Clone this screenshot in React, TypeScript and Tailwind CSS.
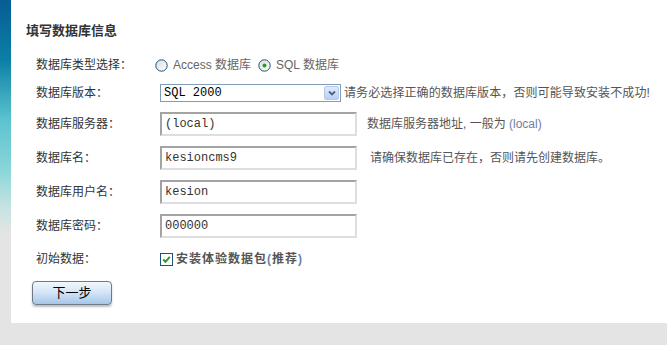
import React from "react";

const font = { fontFamily: '"Liberation Sans", "Noto Sans CJK SC", sans-serif' };

function Label({ children }: { children: React.ReactNode }) {
  return <div className="w-[124px] shrink-0 text-[12px] text-[#333]">{children}</div>;
}

function TextBox({ value }: { value: string }) {
  return (
    <div className="flex h-[24px] w-[197px] items-start border-2 border-t-[#a3a3a3] border-l-[#a3a3a3] border-b-[#dedede] border-r-[#dedede] bg-white pl-[3px] pt-[2px]">
      <span className="text-[12px] leading-[16px] text-[#333]" style={{ fontFamily: '"Liberation Mono", "Noto Sans CJK SC", monospace' }}>
        {value}
      </span>
    </div>
  );
}

function Radio({ checked }: { checked?: boolean }) {
  return (
    <svg width="13" height="13" viewBox="0 0 13 13" className="shrink-0">
      <defs>
        <linearGradient id={checked ? "rg1" : "rg0"} x1="0" y1="0" x2="1" y2="1">
          <stop offset="0" stopColor="#dcdcd7" />
          <stop offset="1" stopColor="#ffffff" />
        </linearGradient>
      </defs>
      <circle cx="6.5" cy="6.5" r="5.7" fill={`url(#${checked ? "rg1" : "rg0"})`} stroke="#1c5180" strokeWidth="1" />
      {checked && <circle cx="6.5" cy="6.5" r="2" fill="#21a121" />}
    </svg>
  );
}

export default function App() {
  return (
    <div className="flex h-[345px] w-[667px] overflow-hidden bg-[#e4e4e4]" style={font}>
      <div className="h-full w-[11px] shrink-0 bg-[linear-gradient(to_bottom,#075d94_0px,#0b80a6_60px,#3aa8bd_95px,#5cc3cf_120px,#8ad6d8_170px,#c4e2e2_205px,#e4e4e4_235px,#e4e4e4_345px)]" />
      <div className="flex flex-1 flex-col">
        <div className="h-[323px] bg-white">
          <div className="pl-[15px] pt-[23px] text-[13px] font-bold leading-[16px] text-[#333]">填写数据库信息</div>
          <div className="mt-[12px] pl-[25px]">
            <div className="flex h-[28px] items-center">
              <Label>数据库类型选择：</Label>
              <div className="-ml-[5px] flex items-center text-[12px] text-[#666]">
                <Radio />
                <span className="ml-[5px]">Access 数据库</span>
                <span className="ml-[7px]"><Radio checked /></span>
                <span className="ml-[5px]">SQL 数据库</span>
              </div>
            </div>
            <div className="flex h-[28px] items-center">
              <Label>数据库版本：</Label>
              <div className="flex h-[18px] w-[181px] items-center justify-between border border-[#7f9db9] bg-white pl-[3px] pr-[1px]">
                <span className="text-[12px] leading-[14px] text-black" style={{ fontFamily: '"Liberation Mono", monospace' }}>SQL 2000</span>
                <div className="flex h-[14px] w-[15px] items-center justify-center rounded-[2px] border border-[#b5c9ef] bg-[linear-gradient(to_bottom,#e1eafc,#b9cff5)]">
                  <svg width="8" height="6" viewBox="0 0 8 6">
                    <path d="M1 1.5 L4 4.5 L7 1.5" fill="none" stroke="#4d6185" strokeWidth="1.8" />
                  </svg>
                </div>
              </div>
              <span className="ml-[3px] text-[12px] tracking-[0.1px] text-[#555]">请务必选择正确的数据库版本，否则可能导致安装不成功!</span>
            </div>
            <div className="flex h-[34px] items-center">
              <Label>数据库服务器：</Label>
              <TextBox value="(local)" />
              <span className="ml-[10px] text-[12px] text-[#555]">
                数据库服务器地址, 一般为 <span className="text-[#6f7fa3]">(local)</span>
              </span>
            </div>
            <div className="flex h-[34px] items-center">
              <Label>数据库名：</Label>
              <TextBox value="kesioncms9" />
              <span className="ml-[13px] text-[12px] text-[#555]">请确保数据库已存在，否则请先创建数据库。</span>
            </div>
            <div className="flex h-[34px] items-center">
              <Label>数据库用户名：</Label>
              <TextBox value="kesion" />
            </div>
            <div className="flex h-[34px] items-center">
              <Label>数据库密码：</Label>
              <TextBox value="000000" />
            </div>
            <div className="flex h-[32px] items-center">
              <Label>初始数据：</Label>
              <div className="flex items-center">
                <div className="flex h-[13px] w-[13px] items-center justify-center border border-[#1c5180] bg-white">
                  <svg width="9" height="9" viewBox="0 0 9 9">
                    <path d="M1.2 4.5 L3.5 6.8 L7.8 1.8" fill="none" stroke="#21a121" strokeWidth="2" />
                  </svg>
                </div>
                <span className="ml-[3px] text-[12px] font-bold tracking-[1px] text-[#555]">
                  安装体验数据包<span className="text-[#6f7fa3]">(</span>推荐<span className="text-[#6f7fa3]">)</span>
                </span>
              </div>
            </div>
          </div>
          <div className="mt-[6px] pl-[21px]">
            <button className="flex h-[24px] w-[80px] items-center justify-center rounded-[4px] border border-[#6f7a86] bg-[linear-gradient(to_bottom,#f1f7fd_0%,#d5e6f7_45%,#a6c6e8_100%)] text-[13px] text-black shadow-[0_2px_2px_rgba(0,0,0,0.25)]">
              下一步
            </button>
          </div>
        </div>
      </div>
    </div>
  );
}
